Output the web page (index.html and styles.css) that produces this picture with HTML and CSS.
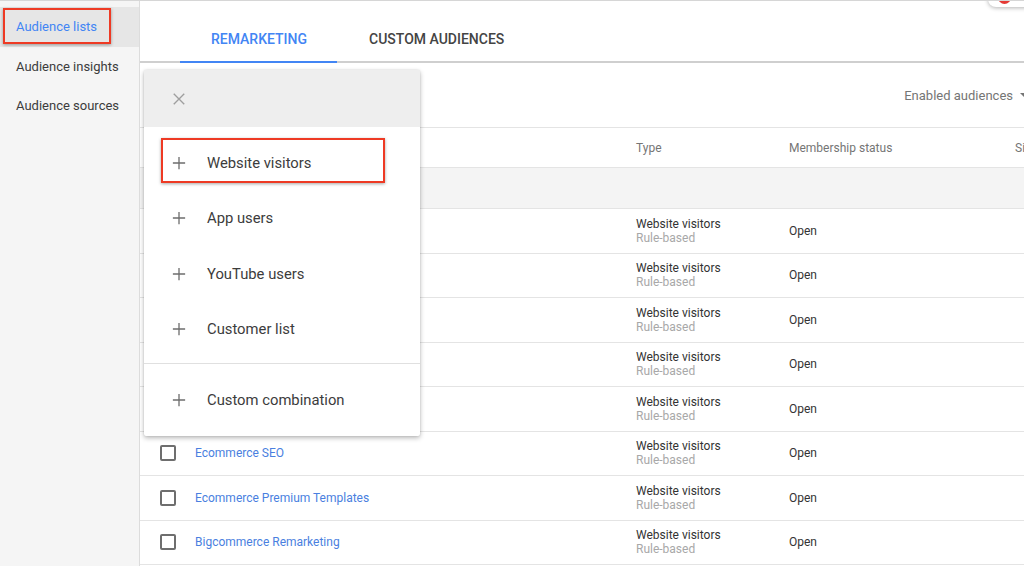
FILE: index.html
```html
<!DOCTYPE html>
<html lang="en">
<head>
    <meta charset="UTF-8">
    <meta name="viewport" content="width=device-width, initial-scale=1.0">
    <title>Audience manager</title>
    <link rel="stylesheet" href="styles.css">
</head>
<body>

    <nav class="sidebar">
        <div class="nav-item active">Audience lists</div>
        <div class="nav-item">Audience insights</div>
        <div class="nav-item">Audience sources</div>
        <div class="mark mark-nav"></div>
    </nav>

    <main class="main">
        <div class="notify"><span class="dot"></span></div>

        <div class="tabs">
            <div class="tab current">REMARKETING</div>
            <div class="tab">CUSTOM AUDIENCES</div>
        </div>

        <div class="toolbar">
            <span class="filter">Enabled audiences</span>
            <span class="caret"></span>
        </div>

        <div class="table">
            <div class="row head">
                <span class="box"></span>
                <span></span>
                <span>Type</span>
                <span>Membership status</span>
                <span>Size</span>
            </div>
            <div class="row group"></div>
            <div class="row">
                <span class="box"></span>
                <a class="name"></a>
                <span class="type">Website visitors<small>Rule-based</small></span>
                <span>Open</span>
                <span></span>
            </div>
            <div class="row">
                <span class="box"></span>
                <a class="name"></a>
                <span class="type">Website visitors<small>Rule-based</small></span>
                <span>Open</span>
                <span></span>
            </div>
            <div class="row">
                <span class="box"></span>
                <a class="name"></a>
                <span class="type">Website visitors<small>Rule-based</small></span>
                <span>Open</span>
                <span></span>
            </div>
            <div class="row">
                <span class="box"></span>
                <a class="name"></a>
                <span class="type">Website visitors<small>Rule-based</small></span>
                <span>Open</span>
                <span></span>
            </div>
            <div class="row">
                <span class="box"></span>
                <a class="name"></a>
                <span class="type">Website visitors<small>Rule-based</small></span>
                <span>Open</span>
                <span></span>
            </div>
            <div class="row">
                <span class="box"></span>
                <a class="name">Ecommerce SEO</a>
                <span class="type">Website visitors<small>Rule-based</small></span>
                <span>Open</span>
                <span></span>
            </div>
            <div class="row">
                <span class="box"></span>
                <a class="name">Ecommerce Premium Templates</a>
                <span class="type">Website visitors<small>Rule-based</small></span>
                <span>Open</span>
                <span></span>
            </div>
            <div class="row">
                <span class="box"></span>
                <a class="name">Bigcommerce Remarketing</a>
                <span class="type">Website visitors<small>Rule-based</small></span>
                <span>Open</span>
                <span></span>
            </div>
        </div>

        <!-- add audience menu, open over the table -->
        <div class="menu">
            <div class="menu-head">
                <svg class="close" viewBox="0 0 16 16"><path d="M2 2L14 14M14 2L2 14"/></svg>
            </div>
            <div class="menu-group">
                <div class="menu-item"><svg class="plus" viewBox="0 0 16 16"><path d="M8 1V15M1 8H15"/></svg>Website visitors</div>
                <div class="menu-item"><svg class="plus" viewBox="0 0 16 16"><path d="M8 1V15M1 8H15"/></svg>App users</div>
                <div class="menu-item"><svg class="plus" viewBox="0 0 16 16"><path d="M8 1V15M1 8H15"/></svg>YouTube users</div>
                <div class="menu-item"><svg class="plus" viewBox="0 0 16 16"><path d="M8 1V15M1 8H15"/></svg>Customer list</div>
            </div>
            <div class="menu-group">
                <div class="menu-item"><svg class="plus" viewBox="0 0 16 16"><path d="M8 1V15M1 8H15"/></svg>Custom combination</div>
            </div>
            <div class="mark mark-menu"></div>
        </div>
    </main>

</body>
</html>
```

FILE: styles.css
```css
html, body {
    margin: 0;
    padding: 0;
    height: 100%;
    overflow: hidden;
}

body {
    display: flex;
    font-family: Roboto, "Liberation Sans", Arial, sans-serif;
    background: #fff;
    color: #333;
    border-top: 1px solid #d6d6d6;
    box-sizing: border-box;
}

/* left nav */
.sidebar {
    position: relative;
    width: 139px;
    flex-shrink: 0;
    background: #f5f5f5;
    border-right: 1px solid #dcdcdc;
    padding-top: 6px;
}

.nav-item {
    height: 39.5px;
    line-height: 39.5px;
    padding-left: 16px;
    font-size: 13px;
    color: #3c3c3c;
}

.nav-item.active {
    background: #e6e6e6;
    color: #4285f4;
}

.mark {
    position: absolute;
    border: 2px solid #ee3a24;
    box-shadow: 0 1px 3px rgba(0, 0, 0, 0.35);
}

.mark-nav {
    left: 3px;
    top: 7px;
    width: 104px;
    height: 32px;
}

/* main */
.main {
    position: relative;
    flex: 1;
    display: flex;
    flex-direction: column;
    min-width: 0;
    overflow: hidden;
}

.notify {
    position: absolute;
    right: -24px;
    top: -28px;
    width: 60px;
    height: 34px;
    background: #fff;
    border-radius: 8px;
    box-shadow: 0 1px 4px rgba(0, 0, 0, 0.3);
}

.notify .dot {
    position: absolute;
    left: 10px;
    top: 18px;
    width: 13px;
    height: 13px;
    border-radius: 50%;
    background: #e53935;
}

.tabs {
    display: flex;
    height: 60px;
    padding-left: 40px;
    border-bottom: 2px solid #cfcfcf;
}

.tab {
    padding: 30px 32px 0;
    font-size: 14px;
    font-weight: 500;
    color: #444;
}

.tab.current {
    padding: 30px 30px 0 31px;
    color: #4285f4;
    border-bottom: 2px solid #4285f4;
    margin-bottom: -2px;
}

.toolbar {
    height: 64px;
    display: flex;
    align-items: center;
    justify-content: flex-end;
    gap: 7px;
    font-size: 13px;
    color: #757575;
    margin-right: -12px;
}

.caret {
    width: 0;
    height: 0;
    border-left: 4px solid transparent;
    border-right: 4px solid transparent;
    border-top: 4px solid #757575;
    margin-right: 8px;
}

/* table */
.table {
    border-top: 1px solid #e4e4e4;
    font-size: 12px;
}

.row {
    display: grid;
    grid-template-columns: 16px 460px 153px 226px 100px;
    align-items: center;
    padding-left: 20px;
    height: 44.5px;
    box-sizing: border-box;
    border-bottom: 1px solid #e4e4e4;
    white-space: nowrap;
}

.row > .name {
    padding-left: 19px;
    color: #4a7fe0;
}

.row.head {
    height: 40px;
    color: #757575;
}

.row.group {
    height: 41px;
    background: #f4f4f4;
}

.box {
    width: 16px;
    height: 16px;
    box-sizing: border-box;
    border: 2px solid #6e6e6e;
    border-radius: 2px;
}

.type {
    display: flex;
    flex-direction: column;
    line-height: 14px;
    color: #333;
}

.type small {
    font-size: 12px;
    color: #a8a8a8;
}

/* add menu */
.menu {
    position: absolute;
    left: 4px;
    top: 69px;
    width: 276px;
    background: #fff;
    border-radius: 2px;
    box-shadow: 0 2px 5px rgba(0, 0, 0, 0.28), 0 0 2px rgba(0, 0, 0, 0.12);
}

.menu-head {
    height: 57px;
    background: #eeeeee;
    display: flex;
    align-items: center;
    padding-left: 28px;
}

.close {
    width: 14px;
    height: 14px;
    stroke: #9e9e9e;
    stroke-width: 1.6;
    fill: none;
}

.menu-group {
    padding: 8px 0 6px;
}

.menu-group + .menu-group {
    border-top: 1px solid #e0e0e0;
    padding: 8px 0;
}

.menu-item {
    height: 55.5px;
    display: flex;
    align-items: center;
    padding-left: 28px;
    font-size: 14.8px;
    color: #3c3c3c;
}

.plus {
    width: 14px;
    height: 14px;
    margin-right: 21px;
    stroke: #6e6e6e;
    stroke-width: 1.5;
    fill: none;
}

.mark-menu {
    left: 17px;
    top: 68px;
    width: 220px;
    height: 41px;
}
```
